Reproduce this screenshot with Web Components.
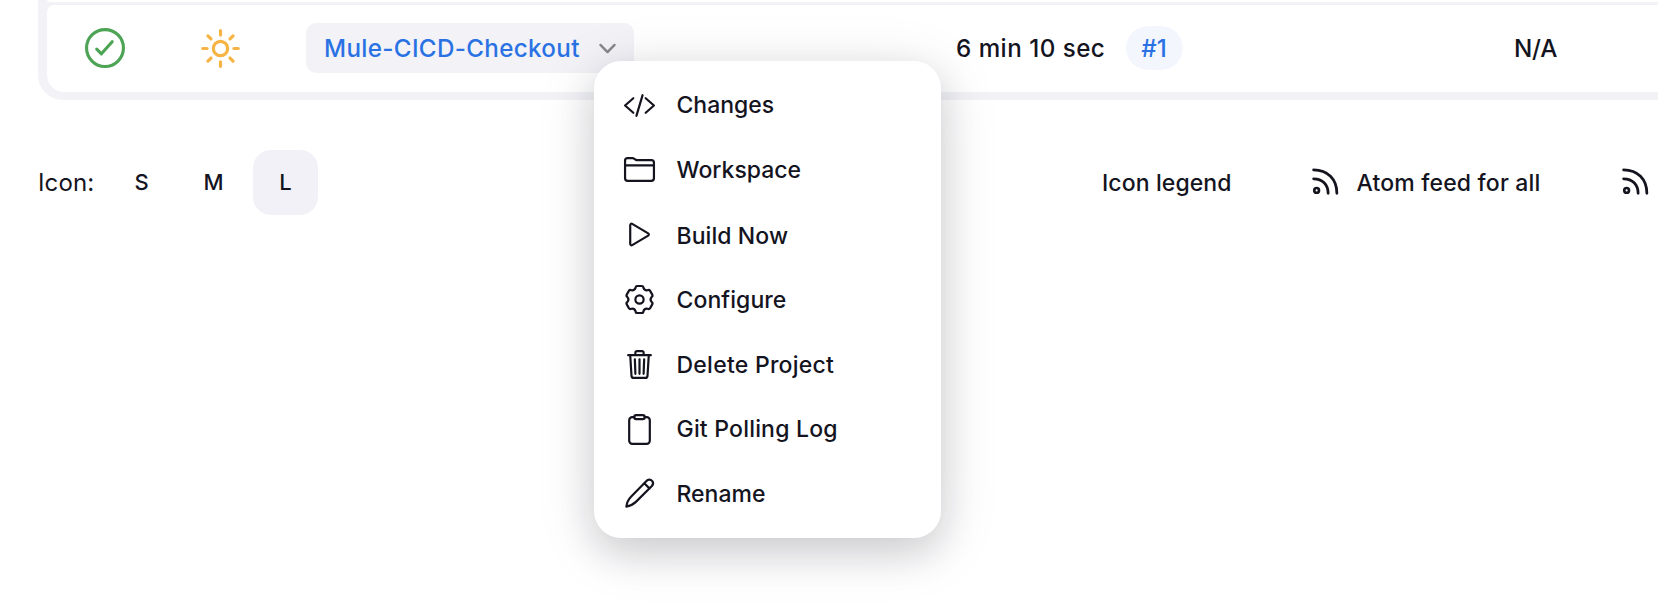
<!DOCTYPE html>
<html lang="en">
<head>
<meta charset="utf-8">
<title>Dashboard</title>
<style>
html,body{margin:0;height:100%;overflow:hidden;background:#fff}
body{font-family:Inter,"Liberation Sans",sans-serif;color:#14141f}
</style>
</head>
<body>
<job-dashboard></job-dashboard>
<script>
// Six-lobed cog outline centred in the 512 unit icon grid.
function cogPath(){
  const p = (r, deg) => { const a = (deg - 90) * Math.PI / 180; return (256 + r * Math.cos(a)).toFixed(1) + ' ' + (256 + r * Math.sin(a)).toFixed(1); };
  let d = 'M' + p(212, -9);
  for (let k = 0; k < 360; k += 60)
    d += `L${p(212, k + 9)}Q${p(217, k + 16)} ${p(190, k + 19)}Q${p(156, k + 30)} ${p(190, k + 41)}Q${p(217, k + 44)} ${p(212, k + 51)}`;
  return d + 'z';
}
const ICONS = {
  changes: '<path d="M160 368L32 256l128-112M352 368l128-112-128-112M304 96l-96 320"/>',
  folder: '<path d="M440 432H72a40 40 0 01-40-40V120a40 40 0 0140-40h75.89a40 40 0 0122.19 6.72l27.84 18.56a40 40 0 0022.19 6.72H440a40 40 0 0140 40v240a40 40 0 01-40 40zM32 192h448"/>',
  play: '<path d="M112 111v290c0 17.44 17 28.52 31 20.16l247.9-148.37c12.12-7.25 12.12-26.33 0-33.58L143 90.84c-14-8.36-31 2.72-31 20.16z"/>',
  gear: `<circle cx="256" cy="256" r="64"/><path d="${cogPath()}"/>`,
  trash: '<path d="M112 112l20 320c.95 18.49 14.4 32 32 32h184c17.67 0 30.87-13.51 32-32l20-320M80 112h352M192 112V72a23.93 23.93 0 0124-24h80a23.93 23.93 0 0124 24v40M256 176v224M184 176l8 224M328 176l-8 224"/>',
  clipboard: '<path d="M336 64h32a48 48 0 0148 48v320a48 48 0 01-48 48H144a48 48 0 01-48-48V112a48 48 0 0148-48h32"/><rect x="176" y="32" width="160" height="64" rx="26"/>',
  pencil: '<path d="M364 62a57 57 0 0188-2q32 38-4 80L200 386q-60 58-148 74 12-92 76-156L364 62zM330 98l84 82"/>',
  rss: '<circle cx="122" cy="390" r="38" stroke-width="42"/><path stroke-width="44" d="M74 204c140 0 232 92 232 232M74 62c224 0 372 150 372 374"/>',
  ok: '<circle cx="256" cy="256" r="236" stroke-width="40"/><path stroke-width="40" d="M150 270l60 60 138-154"/>',
  sun: '<g stroke-width="40"><circle cx="256" cy="256" r="89"/><path d="M256 34v54M256 424v54M34 256h54M424 256h54M99 99l38 38M375 375l38 38M99 413l38-38M375 137l38-38"/></g>',
  chevron: '<path stroke-width="74" d="M44 150l212 212 212-212"/>'
};
class Base extends HTMLElement {
  constructor(){ super(); this.attachShadow({mode:'open'}); }
}
customElements.define('ui-icon', class extends Base {
  connectedCallback(){
    this.shadowRoot.innerHTML = `<style>:host{display:block;flex:none;width:33px;height:33px}svg{display:block;width:100%;height:100%;overflow:visible}</style>
    <svg viewBox="0 0 512 512" fill="none" stroke="currentColor" stroke-width="34" stroke-linecap="round" stroke-linejoin="round">${ICONS[this.getAttribute('name')]}</svg>`;
  }
});
customElements.define('menu-item', class extends Base {
  connectedCallback(){
    this.shadowRoot.innerHTML = `<style>:host{display:flex;align-items:center;height:64.8px;padding-left:28.7px;gap:20.8px;font-size:23px;font-weight:500;line-height:32px;white-space:nowrap}span{padding-top:var(--drop,0)}</style>
    <ui-icon name="${this.getAttribute('icon')}"></ui-icon><span><slot></slot></span>`;
  }
});
customElements.define('context-menu', class extends Base {
  connectedCallback(){
    this.shadowRoot.innerHTML = `<style>:host{display:block;box-sizing:border-box;width:347px;height:477px;padding:11.7px 0;border-radius:27px;background:#fff;box-shadow:0 10px 60px rgba(20,20,40,.13),0 15px 36px rgba(20,20,40,.13)}</style><slot></slot>`;
  }
});
customElements.define('job-row', class extends Base {
  connectedCallback(){
    this.shadowRoot.innerHTML = `<style>
    :host{display:flex;align-items:center;box-sizing:border-box;height:87px;background:#fff;border-radius:7px 0 0 17px;padding:0 0 1px 38px;font-size:24.2px;font-weight:450;line-height:32px;white-space:nowrap}
    .ok{width:40px;height:40px;color:#4ca454;margin-right:75px}
    .sun{width:41px;height:41px;color:#f6b445;margin-right:65px}
    .job{display:flex;align-items:center;box-sizing:border-box;width:328px;height:50px;border-radius:10px;background:#f2f2f7;padding-left:18px;color:#2a72e4}
    .t,.dur,.na{padding-top:2px}
    .job .t{width:275px;letter-spacing:.34px}
    .job ui-icon{width:17px;height:17px;color:#87878c}
    .dur{margin-left:322px;width:170px;letter-spacing:.48px}
    .num{box-sizing:border-box;width:57px;height:44px;line-height:44px;padding:1px 1px 0 0;border-radius:22px;background:#f3f7fd;color:#2a72e4;text-align:center}
    .na{margin-left:331px;letter-spacing:-.2px}
    </style>
    <ui-icon class="ok" name="ok"></ui-icon><ui-icon class="sun" name="sun"></ui-icon>
    <div class="job"><span class="t"><slot></slot></span><ui-icon name="chevron"></ui-icon></div>
    <span class="dur"><slot name="duration"></slot></span><span class="num"><slot name="build"></slot></span><span class="na"><slot name="last"></slot></span>`;
  }
});
customElements.define('size-button', class extends Base {
  connectedCallback(){
    this.shadowRoot.innerHTML = `<style>:host{display:block;flex:none;width:65px;height:65px;line-height:65px;border-radius:18px;text-align:center;font-size:22px;font-weight:500}:host([selected]){background:#f2f1f7}</style><slot></slot>`;
  }
});
customElements.define('job-dashboard', class extends Base {
  connectedCallback(){
    this.shadowRoot.innerHTML = `<style>
    :host{display:block;position:relative;width:1658px;height:610px;overflow:hidden}
    .table{display:flex;flex-direction:column;gap:3px;box-sizing:border-box;height:100px;margin-left:38px;padding:0 0 8px 9px;background:#f2f2f7;border-radius:0 0 0 25px}
    .prev{height:2px;background:#fff;border-radius:0 0 0 7px}
    .bar{display:flex;align-items:center;height:65px;margin-top:50px;padding-left:38px;white-space:nowrap;font-size:23px;font-weight:500}
    .lab{width:71px;font-size:24px;font-weight:400;letter-spacing:.15px}
    size-button+size-button{margin-left:7px}
    .legend{margin-left:784px;width:207px;letter-spacing:.1px}
    .feed{margin-left:15.5px;width:262px;letter-spacing:.17px}
    .bar ui-icon{width:32px;height:32px;margin-bottom:2px}
    context-menu{position:absolute;left:594px;top:61px}
    .configure{letter-spacing:.08px;--drop:2px}
    .delete{letter-spacing:.25px;--drop:2px}
    .log{letter-spacing:.2px}
    .build{letter-spacing:.08px;--drop:3px}
    </style>
    <div class="table"><div class="prev"></div>
      <job-row>Mule-CICD-Checkout<span slot="duration">6 min 10 sec</span><span slot="build">#1</span><span slot="last">N/A</span></job-row></div>
    <div class="bar"><span class="lab">Icon:</span><size-button>S</size-button><size-button>M</size-button><size-button selected>L</size-button>
      <span class="legend">Icon legend</span><ui-icon name="rss"></ui-icon><span class="feed">Atom feed for all</span><ui-icon name="rss"></ui-icon></div>
    <context-menu>
      <menu-item icon="changes">Changes</menu-item><menu-item icon="folder">Workspace</menu-item><menu-item class="build" icon="play">Build Now</menu-item><menu-item class="configure" icon="gear">Configure</menu-item><menu-item class="delete" icon="trash">Delete Project</menu-item><menu-item class="log" icon="clipboard">Git Polling Log</menu-item><menu-item icon="pencil">Rename</menu-item>
    </context-menu>`;
  }
});
</script>
</body>
</html>
